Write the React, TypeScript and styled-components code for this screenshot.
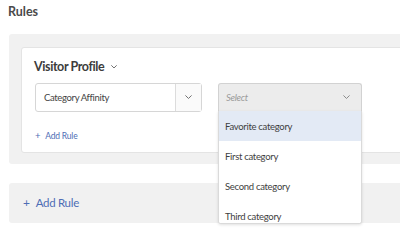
import React from "react";
import styled, { createGlobalStyle } from "styled-components";

const GlobalStyle = createGlobalStyle`
  html, body {
    margin: 0;
    padding: 0;
    background: #ffffff;
    overflow: hidden;
    font-family: Lato, "Liberation Sans", sans-serif;
    color: #4b4b4b;
  }
`;

const Page = styled.div`
  width: 400px;
  height: 250px;
  padding: 4px 0 0 8px;
  box-sizing: border-box;
  overflow: hidden;
`;

const Title = styled.h1`
  margin: 0;
  font-size: 12.5px;
  line-height: 16px;
  font-weight: 700;
  color: #4a4a4a;
`;

const Panel = styled.div`
  margin-left: 1px;
  width: 440px;
  background: #f1f1f1;
  border-radius: 3px;
  box-sizing: border-box;
`;

const RulesPanel = styled(Panel)`
  margin-top: 14px;
  padding: 13px 0 11px 12px;
`;

const AddPanel = styled(Panel)`
  margin-top: 19px;
  height: 40px;
  display: flex;
  align-items: center;
  padding-left: 14px;
`;

const Card = styled.div`
  background: #ffffff;
  border: 1px solid #e4e4e4;
  border-radius: 3px;
  padding: 10px 13px 10px 13px;
`;

const Header = styled.div`
  display: flex;
  align-items: center;
  gap: 7px;
  font-size: 12.5px;
  line-height: 18px;
  font-weight: 700;
  color: #3c3c3c;
  letter-spacing: -0.4px;
  margin-left: -1px;
`;

const Row = styled.div`
  margin-top: 7px;
  display: flex;
  gap: 16px;
  align-items: flex-start;
`;

const Picker = styled.div`
  width: 167px;
  height: 29px;
  box-sizing: border-box;
  border: 1px solid #d6d6d6;
  border-radius: 3px;
  display: flex;
  background: #fff;
`;

const PickerLabel = styled.div`
  flex: 1;
  display: flex;
  align-items: center;
  padding-left: 8px;
  font-size: 9.5px;
  letter-spacing: -0.35px;
  color: #444;
`;

const PickerButton = styled.div`
  width: 25px;
  border-left: 1px solid #dcdcdc;
  display: flex;
  align-items: center;
  justify-content: center;
  background: #fafafa;
`;

const SelectWrap = styled.div`
  position: relative;
  width: 144px;
`;

const SelectField = styled.div`
  height: 28px;
  box-sizing: border-box;
  border: 1px solid #d2d2d2;
  border-bottom: none;
  border-radius: 3px 3px 0 0;
  background: #ececec;
  display: flex;
  align-items: center;
  justify-content: space-between;
  padding: 0 11px 0 7px;
  font-size: 9.5px;
  letter-spacing: -0.3px;
  font-style: italic;
  color: #9a9a9a;
`;

const Menu = styled.ul`
  position: absolute;
  top: 28px;
  left: 0;
  width: 144px;
  height: 113px;
  margin: 0;
  padding: 0;
  list-style: none;
  box-sizing: border-box;
  background: #fff;
  border: 1px solid #dadada;
  border-top: none;
  border-radius: 0 0 3px 3px;
  box-shadow: 0 1px 3px rgba(0, 0, 0, 0.12);
  overflow: hidden;
  z-index: 2;
`;

const Item = styled.li<{ $active?: boolean }>`
  height: 30px;
  display: flex;
  align-items: center;
  padding-left: 6px;
  font-size: 9.5px;
  letter-spacing: -0.3px;
  color: #3e3e3e;
  background: ${(p) => (p.$active ? "#e3eaf5" : "#fff")};
`;

const AddLink = styled.div<{ $big?: boolean }>`
  display: flex;
  align-items: center;
  gap: ${(p) => (p.$big ? "6px" : "5px")};
  color: #4e6db5;
  font-size: ${(p) => (p.$big ? "11.5px" : "8.5px")};
  line-height: ${(p) => (p.$big ? "18px" : "12px")};
  letter-spacing: ${(p) => (p.$big ? "-0.3px" : "-0.2px")};
  margin-top: ${(p) => (p.$big ? "0" : "18px")};
  span.plus {
    font-size: ${(p) => (p.$big ? "12px" : "9.5px")};
  }
`;

const Chevron = ({ size = 6, color = "#6e6e6e" }: { size?: number; color?: string }) => (
  <svg width={size} height={size * 0.6} viewBox="0 0 10 6">
    <path d="M1 1 L5 5 L9 1" fill="none" stroke={color} strokeWidth="1.4" strokeLinecap="round" strokeLinejoin="round" />
  </svg>
);

const options = ["Favorite category", "First category", "Second category", "Third category"];

export default function App() {
  return (
    <>
      <GlobalStyle />
      <Page>
        <Title>Rules</Title>
        <RulesPanel>
          <Card>
            <Header>
              Visitor Profile <Chevron size={6} color="#555" />
            </Header>
            <Row>
              <Picker>
                <PickerLabel>Category Affinity</PickerLabel>
                <PickerButton>
                  <Chevron size={7} />
                </PickerButton>
              </Picker>
              <SelectWrap>
                <SelectField>
                  Select
                  <Chevron size={7} color="#888" />
                </SelectField>
                <Menu>
                  {options.map((o, i) => (
                    <Item key={o} $active={i === 0}>
                      {o}
                    </Item>
                  ))}
                </Menu>
              </SelectWrap>
            </Row>
            <AddLink>
              <span className="plus">+</span>
              <span>Add Rule</span>
            </AddLink>
          </Card>
        </RulesPanel>
        <AddPanel>
          <AddLink $big>
            <span className="plus">+</span>
            <span>Add Rule</span>
          </AddLink>
        </AddPanel>
      </Page>
    </>
  );
}
